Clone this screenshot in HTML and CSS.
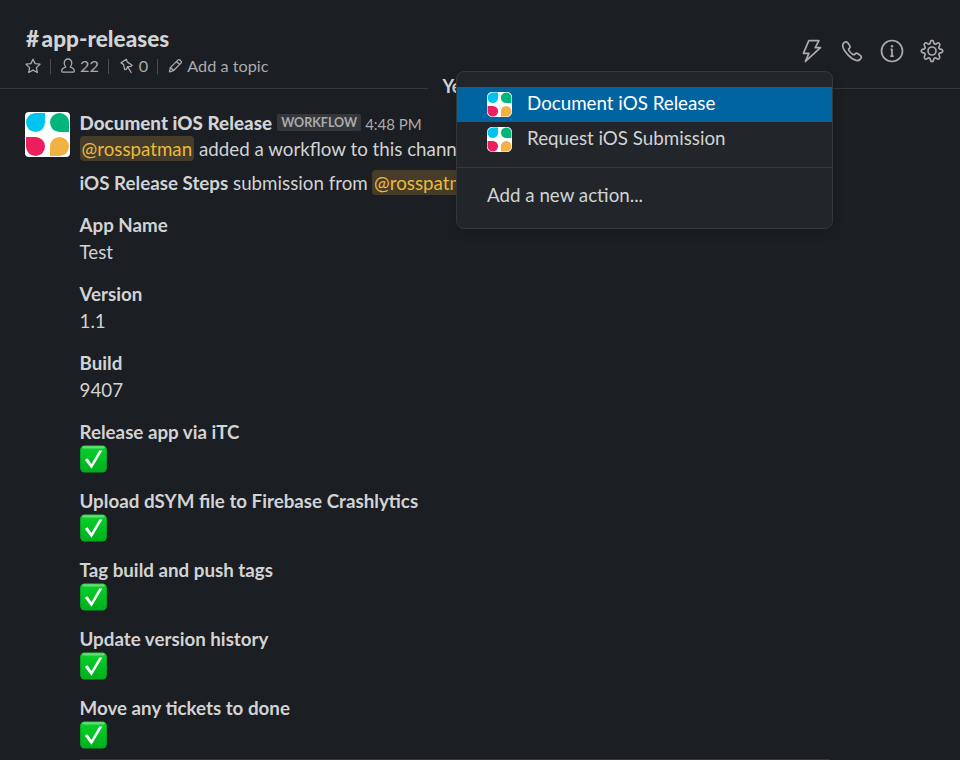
FILE: index.html
```
<!DOCTYPE html>
<html lang="en">
<head>
<meta charset="utf-8">
<title>app-releases</title>
<link rel="stylesheet" href="styles.css">
</head>
<body>
<svg width="0" height="0" class="defs" aria-hidden="true">
  <defs>
    <linearGradient id="green" x1="0" y1="0" x2="0" y2="1">
      <stop offset="0" stop-color="#20c934"/><stop offset=".2" stop-color="#05cc28"/><stop offset="1" stop-color="#00ae1e"/>
    </linearGradient>
    <symbol id="logo" viewBox="0 0 45 45">
      <path fill="#fff" d="M0 0h45v45H0z"/>
      <path fill="#00c4f0" d="M10.5 1H20v9.5A9.5 9.5 0 1 1 10.5 1z"/>
      <path fill="#00b67d" d="M34.500 1A9.500 9.500 0 0 1 44 10.500V20H34.500a9.500 9.500 0 0 1 0-19z"/>
      <path fill="#ec1e5e" d="M1 25h9.500A9.500 9.500 0 1 1 1 34.500z"/>
      <path fill="#f2b143" d="M34.500 25A9.500 9.500 0 1 1 34.500 44H25v-9.500A9.500 9.500 0 0 1 34.500 25z"/>
    </symbol>
    <symbol id="check" viewBox="0 0 27 28">
      <rect x=".2" y=".5" width="26.600" height="27" rx="4.500" fill="url(#green)"/>
      <rect x="2.500" y="1.200" width="22" height="2.200" rx="1.100" fill="#fff" opacity=".35"/>
      <path d="M4.800 14.800l2.700-1.500 3.900 5.800L19.300 5.600h3L11.500 23.800z" fill="#fff"/>
    </symbol>
  </defs>
</svg>
<header class="header">
  <div>
    <h1 class="title"><span class="hash">#</span>app-releases</h1>
    <div class="meta">
      <svg class="icon star" width="16" height="16" viewBox="0 0 16 16"><path d="M8 1.200l2.100 4.400 4.900.6-3.600 3.400.9 4.900L8 12.100l-4.300 2.400.9-4.900L1 6.200l4.900-.6z"/></svg>
      <i class="bar"></i>
      <svg class="icon person" width="14" height="16" viewBox="0 0 14 16"><path d="M7 1a3.800 3.800 0 0 1 3.800 4c0 1.900-.9 3.300-1.600 4.100 2.300.6 4.100 1.900 4.100 3.800 0 .9-.4 1.300-1.200 1.300H1.900C1.100 14.200.7 13.800.7 12.900c0-1.900 1.800-3.200 4.100-3.800C4.100 8.300 3.200 6.900 3.200 5A3.800 3.800 0 0 1 7 1z"/></svg>
      <span class="members">22</span>
      <i class="bar"></i>
      <svg class="icon pin" width="14" height="16" viewBox="0 0 14 16"><path d="M6.300 1.300l.9 2.600 4.900 3.300-1.300 1.200-3 .2-1.600 2.800-1.500.2L3.500 6.400 1 4.900zM7.700 8.800l3.500 5.700"/></svg>
      <span class="pins">0</span>
      <i class="bar"></i>
      <svg class="icon pencil" width="15" height="16" viewBox="0 0 15 16"><path d="M1.500 13.800l.8-4.200 7.600-7.500c.8-.7 1.500-.6 2.300.1l.6.700c.8.8.8 1.500.1 2.200l-7.500 7.600zM8.500 3.500l3 3M2.500 9.500l3 3"/></svg>
      <span class="topic">Add a topic</span>
    </div>
  </div>
  <div class="tools">
    <svg class="icon" width="24" height="24" viewBox="0 0 24 24"><path d="M8.800 1.600h10.100l-3.700 7.100h5.300L5.400 22.400 8.900 14.300H3.400z"/></svg>
    <svg class="icon" width="24" height="24" viewBox="0 0 24 24"><path d="M3.600 4.100C5 2.500 6.600 2.400 7.600 3.600l2 2.800c.9 1.200.5 2.100-.4 2.900-.8.700-.8 1.400-.2 2.300 1 1.500 2.200 2.700 3.700 3.700.9.600 1.600.6 2.300-.2.800-.9 1.700-1.300 2.900-.4l2.600 1.900c1.300 1 1.100 2.500-.5 3.900-1.800 1.600-4.800 1.200-8.300-1.300-2.800-1.900-5-4.300-6.900-7.100C2.600 8.900 2.200 5.900 3.600 4.100z"/></svg>
    <svg class="icon" width="24" height="24" viewBox="0 0 24 24"><circle cx="12" cy="12" r="10.500"/><path d="M11.300 10.400H12v6.300M10.900 17.100h2.200"/><circle class="dot" cx="12" cy="7.300" r="1.200"/></svg>
    <svg class="icon" width="24" height="24" viewBox="0 0 24 24"><path d="M12 1.300c1.600 0 1.500.7 1.700 2.300.2 1.500 1.500 2 2.700 1.100 1.300-1 1.800-1.400 2.900-.2 1.200 1.100.8 1.600-.1 2.900-.8 1.200-.3 2.500 1.200 2.700 1.600.2 2.300.3 2.300 1.900s-.7 1.700-2.300 1.900c-1.500.2-2 1.500-1.200 2.700.9 1.300 1.300 1.800.1 2.900-1.100 1.200-1.600.8-2.900-.2-1.200-.9-2.500-.4-2.700 1.100-.2 1.600-.1 2.300-1.700 2.300s-1.500-.7-1.700-2.300c-.2-1.500-1.500-2-2.700-1.100-1.300 1-1.800 1.400-2.900.2-1.200-1.100-.8-1.600.1-2.900.8-1.200.3-2.500-1.200-2.700-1.600-.2-2.300-.3-2.300-1.900s.7-1.700 2.300-1.900c1.500-.2 2-1.500 1.200-2.700-.9-1.300-1.300-1.800-.1-2.900 1.100-1.200 1.600-.8 2.900.2 1.200.9 2.500.4 2.700-1.100.2-1.600.1-2.300 1.700-2.300z"/><circle cx="12" cy="12" r="4"/></svg>
  </div>
</header>
<main>
  <div class="day"><span>Yesterday</span></div>
  <article class="message">
    <svg class="avatar" width="45" height="45"><use href="#logo"/></svg>
    <div class="body">
      <div class="byline"><b class="name">Document iOS Release</b><span class="tag">WORKFLOW</span><time>4:48 PM</time></div>
      <p><span class="mention">@rosspatman</span> added a workflow to this channel</p>
      <p class="steps"><b>iOS Release Steps</b> submission from <span class="mention">@rosspatman</span></p>
      <dl>
        <div><dt>App Name</dt><dd>Test</dd></div>
        <div><dt>Version</dt><dd>1.1</dd></div>
        <div><dt>Build</dt><dd>9407</dd></div>
        <div><dt>Release app via iTC</dt><dd><svg width="27" height="28"><use href="#check"/></svg></dd></div>
        <div><dt>Upload dSYM file to Firebase Crashlytics</dt><dd><svg width="27" height="28"><use href="#check"/></svg></dd></div>
        <div><dt>Tag build and push tags</dt><dd><svg width="27" height="28"><use href="#check"/></svg></dd></div>
        <div><dt>Update version history</dt><dd><svg width="27" height="28"><use href="#check"/></svg></dd></div>
        <div><dt>Move any tickets to done</dt><dd><svg width="27" height="28"><use href="#check"/></svg></dd></div>
      </dl>
      <hr>
    </div>
  </article>
</main>
<nav class="menu">
  <a class="item active"><svg width="25" height="25"><use href="#logo"/></svg><span>Document iOS Release</span></a>
  <a class="item"><svg width="25" height="25"><use href="#logo"/></svg><span>Request iOS Submission</span></a>
  <a class="new">Add a new action...</a>
</nav>
</body>
</html>
```
FILE: styles.css
```
* { box-sizing: border-box; }
body {
  margin: 0;
  height: 760px;
  overflow: hidden;
  position: relative;
  background: #1b1e22;
  color: #d2d3d4;
  font: 18.75px/27px Lato, sans-serif;
}
svg { display: block; flex: none; }
.defs { position: absolute; }
.icon {
  fill: none;
  stroke: #ababad;
  stroke-width: 1.3;
  stroke-linejoin: round;
  stroke-linecap: round;
}
.icon .dot { fill: #ababad; stroke: none; }
.header {
  height: 78px;
  padding: 25px 16px 0 24.5px;
  display: flex;
  justify-content: space-between;
}
.title { margin: 0 0 0 1.5px; font-size: 22.5px; line-height: 28px; font-weight: 900; letter-spacing: .05px; }
.hash { margin-right: 2.5px; }
.meta {
  display: flex;
  align-items: center;
  height: 26px;
  font-size: 16.25px;
  color: #ababad;
}
.meta span { margin-top: -1px; }
.bar { width: 1px; height: 15px; background: #4b4d50; }
.star { margin-right: 9px; }
.person { margin: 0 5.500px 0 10px; }
.members { margin-right: 9px; }
.pin { margin: 0 5px 0 11px; }
.pins { margin-right: 9px; }
.pencil { margin: 0 4px 0 10px; }
.tools { display: flex; gap: 16px; padding-top: 14px; }
.tools .icon { stroke-width: 1.7; }
.day { display: flex; align-items: center; height: 20px; font-weight: 700; }
.day::before, .day::after { content: ""; height: 1px; flex: 1; background: #35373b; margin-top: 1px; }
.day span { margin-top: -3px; padding: 0 14.500px; width: 105px; flex: none; font-size: 18px; letter-spacing: -.5px; }
.day::before { flex: 0 0 428px; }
.message { display: flex; gap: 9.5px; padding: 14px 0 0 25px; }
.avatar { border-radius: 4px; }
.body { flex: 1; margin-top: -1px; }
.byline { display: flex; align-items: center; height: 24px; }
.name { margin-top: -1px; font-weight: 900; letter-spacing: .05px; }
.tag {
  margin: -1px 4px 0 5px;
  padding: 0 4px;
  height: 17px;
  border-radius: 2px;
  background: #35373b;
  color: #ababad;
  font-size: 12.5px;
  line-height: 17px;
  font-weight: 700;
}
time { margin-top: 2px; font-size: 15px; color: #ababad; }
p { margin: 0; white-space: nowrap; }
.mention { display: inline-block; height: 25px; line-height: 25px; padding: 0 2px; border-radius: 4px; background: #453c2a; color: #ecb93f; }
.steps { margin-top: 7px; }
.steps .mention { margin-left: -.5px; }
dl { margin: 15px 0 0; display: grid; gap: 15px; }
dt { font-weight: 700; }
dd { margin: 0; height: 27px; }
hr { width: 750px; height: 1px; margin: 11px 0 0; border: 0; background: #35373b; }
.menu {
  position: absolute;
  left: 456px;
  top: 71px;
  width: 377px;
  height: 158px;
  padding-top: 15px;
  border: 1px solid #35373b;
  border-radius: 8px;
  background: #222529;
  box-shadow: 0 4px 12px rgba(0, 0, 0, .12);
}
.item { display: flex; align-items: center; gap: 15px; height: 35px; padding: 0 30px; }
.item svg { border-radius: 5px; }
.item span { margin-top: -4px; }
.active { background: #0064a0; color: #fff; }
.new { display: block; margin-top: 10px; padding: 13px 30px; border-top: 1px solid #35373b; }
```
